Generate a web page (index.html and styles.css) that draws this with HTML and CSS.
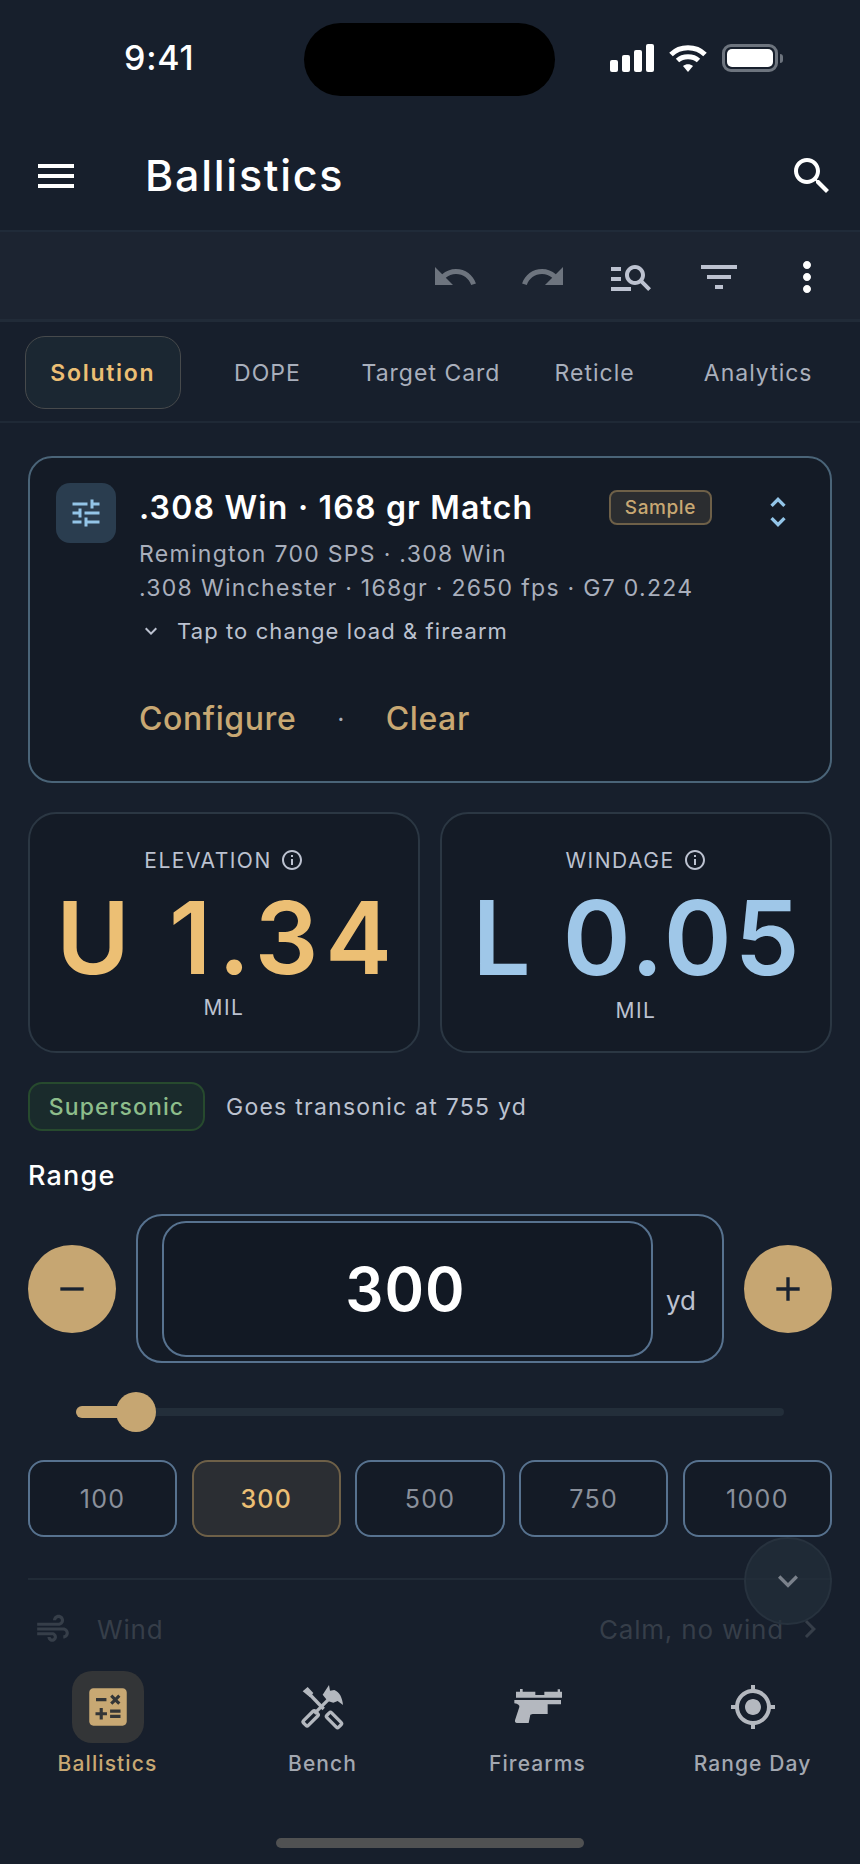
FILE: index.html

```html
<!DOCTYPE html>
<html lang="en">
<head>
    <meta charset="UTF-8">
    <meta name="viewport" content="width=device-width, initial-scale=1.0">
    <title>Ballistics</title>
    <link rel="stylesheet" href="styles.css">
</head>
<body>
    <div class="screen">
        <div class="status-bar">
            <span class="clock">9:41</span>
            <div class="island"></div>
            <div class="status-icons">
                <svg class="signal" width="44" height="28" viewBox="0 0 44 28" fill="#fff">
                    <rect x="0" y="16" width="8" height="12" rx="2"/>
                    <rect x="12" y="11" width="8" height="17" rx="2"/>
                    <rect x="24" y="6" width="8" height="22" rx="2"/>
                    <rect x="36" y="0" width="8" height="28" rx="2"/>
                </svg>
                <svg class="wifi" width="38" height="28" viewBox="0 0 38 28" fill="none" stroke="#fff" stroke-width="5">
                    <path d="M2 10.500C11 1.500 27 1.500 36 10.500"/>
                    <path d="M8.500 16.500C14 11.500 24 11.500 29.500 16.500"/>
                    <path d="M14 22L19 28L24 22C21 19.500 17 19.500 14 22Z" fill="#fff" stroke="none"/>
                </svg>
                <div class="battery"><div class="battery-fill"></div></div>
                <div class="battery-nub"></div>
            </div>
        </div>

        <header class="app-bar">
            <svg class="icon-48" viewBox="0 0 24 24" fill="#fff"><path d="M3 18h18v-2H3v2zm0-5h18v-2H3v2zm0-7v2h18V6H3z"/></svg>
            <h1>Ballistics</h1>
            <svg class="icon-48" viewBox="0 0 24 24" fill="#fff"><path d="M15.500 14h-.79l-.28-.27C15.410 12.590 16 11.110 16 9.500 16 5.910 13.090 3 9.500 3S3 5.910 3 9.500 5.910 16 9.500 16c1.610 0 3.090-.59 4.230-1.570l.27.28v.79l5 4.990L20.490 19l-4.990-5zm-6 0C7.010 14 5 11.990 5 9.500S7.010 5 9.500 5 14 7.010 14 9.500 11.990 14 9.500 14z"/></svg>
        </header>

        <div class="toolbar">
            <svg class="icon-48" viewBox="0 0 24 24" fill="#6d747e"><path d="M12.500 8c-2.650 0-5.050.99-6.900 2.600L2 7v9h9l-3.620-3.620c1.390-1.160 3.160-1.880 5.120-1.880 3.540 0 6.550 2.310 7.600 5.500l2.370-.78C21.080 11.030 17.150 8 12.500 8z"/></svg>
            <svg class="icon-48" viewBox="0 0 24 24" fill="#6d747e"><path d="M18.400 10.600C16.550 8.990 14.150 8 11.500 8c-4.650 0-8.580 3.030-9.960 7.220L3.900 16c1.050-3.190 4.050-5.500 7.600-5.500 1.950 0 3.730.72 5.120 1.880L13 16h9V7l-3.600 3.600z"/></svg>
            <svg class="icon-48" viewBox="0 0 24 24" fill="#bcc2d0"><path d="M7 9H2V7h5v2zm0 3H2v2h5v-2zm13.590 7-3.830-3.830c-.8.52-1.740.83-2.760.83-2.760 0-5-2.240-5-5s2.240-5 5-5 5 2.240 5 5c0 1.020-.31 1.960-.83 2.750L22 17.590 20.590 19zM17 11c0-1.650-1.350-3-3-3s-3 1.350-3 3 1.350 3 3 3 3-1.350 3-3zM2 19h10v-2H2v2z"/></svg>
            <svg class="icon-48" viewBox="0 0 24 24" fill="#bcc2d0"><path d="M10 18h4v-2h-4v2zM3 6v2h18V6H3zm3 7h12v-2H6v2z"/></svg>
            <svg class="icon-48" viewBox="0 0 24 24" fill="#fff"><path d="M12 8c1.100 0 2-.9 2-2s-.9-2-2-2-2 .9-2 2 .9 2 2 2zm0 2c-1.100 0-2 .9-2 2s.9 2 2 2 2-.9 2-2-.9-2-2-2zm0 6c-1.100 0-2 .9-2 2s.9 2 2 2 2-.9 2-2-.9-2-2-2z"/></svg>
        </div>

        <nav class="tabs">
            <div class="tab active">Solution</div>
            <div class="tab">DOPE</div>
            <div class="tab">Target Card</div>
            <div class="tab">Reticle</div>
            <div class="tab">Analytics</div>
        </nav>

        <main class="content">
            <section class="load-card">
                <div class="load-icon">
                    <svg width="36" height="36" viewBox="0 0 24 24" fill="#93c5e8"><path d="M3 17v2h6v-2H3zM3 5v2h10V5H3zm10 16v-2h8v-2h-8v-2h-2v6h2zM7 9v2H3v2h4v2h2V9H7zm14 4v-2H11v2h10zm-6-4h2V7h4V5h-4V3h-2v6z"/></svg>
                </div>
                <div class="load-body">
                    <div class="load-title-row">
                        <h2>.308 Win · 168 gr Match</h2>
                        <span class="sample-chip">Sample</span>
                        <svg class="unfold" width="40" height="40" viewBox="0 0 24 24" fill="#93c5e8"><path d="M12 5.830L15.170 9l1.410-1.410L12 3 7.410 7.590 8.830 9 12 5.830zm0 12.340L8.830 15l-1.410 1.410L12 21l4.590-4.590L15.170 15 12 18.170z"/></svg>
                    </div>
                    <p class="load-sub first">Remington 700 SPS · .308 Win</p>
                    <p class="load-sub">.308 Winchester · 168gr · 2650 fps · G7 0.224</p>
                    <div class="load-hint">
                        <svg width="24" height="24" viewBox="0 0 24 24" fill="#bcc2d0"><path d="M16.590 8.590L12 13.170 7.410 8.590 6 10l6 6 6-6z"/></svg>
                        <span>Tap to change load &amp; firearm</span>
                    </div>
                    <div class="load-actions">
                        <span>Configure</span>
                        <span class="dot">·</span>
                        <span>Clear</span>
                    </div>
                </div>
            </section>

            <section class="readouts">
                <div class="readout">
                    <div class="readout-label">ELEVATION
                        <svg width="24" height="24" viewBox="0 0 24 24" fill="#bcc2d0"><path d="M11 7h2v2h-2zm0 4h2v6h-2zm1-9C6.480 2 2 6.480 2 12s4.480 10 10 10 10-4.480 10-10S17.520 2 12 2zm0 18c-4.410 0-8-3.590-8-8s3.590-8 8-8 8 3.590 8 8-3.590 8-8 8z"/></svg>
                    </div>
                    <div class="readout-value elevation">U 1.34</div>
                    <div class="readout-unit">MIL</div>
                </div>
                <div class="readout">
                    <div class="readout-label">WINDAGE
                        <svg width="24" height="24" viewBox="0 0 24 24" fill="#bcc2d0"><path d="M11 7h2v2h-2zm0 4h2v6h-2zm1-9C6.480 2 2 6.480 2 12s4.480 10 10 10 10-4.480 10-10S17.520 2 12 2zm0 18c-4.410 0-8-3.590-8-8s3.590-8 8-8 8 3.590 8 8-3.590 8-8 8z"/></svg>
                    </div>
                    <div class="readout-value windage">L 0.05</div>
                    <div class="readout-unit">MIL</div>
                </div>
            </section>

            <div class="speed-row">
                <span class="speed-chip">Supersonic</span>
                <span class="speed-note">Goes transonic at 755 yd</span>
            </div>

            <div class="range-label">Range</div>
            <div class="stepper">
                <div class="round-btn">
                    <svg width="40" height="40" viewBox="0 0 24 24" fill="#182230"><path d="M19 13H5v-2h14v2z"/></svg>
                </div>
                <div class="range-field">
                    <div class="range-input">300</div>
                    <span class="range-unit">yd</span>
                </div>
                <div class="round-btn">
                    <svg width="40" height="40" viewBox="0 0 24 24" fill="#182230"><path d="M19 13h-6v6h-2v-6H5v-2h6V5h2v6h6v2z"/></svg>
                </div>
            </div>

            <div class="slider">
                <div class="slider-fill"></div>
                <div class="slider-thumb"></div>
            </div>

            <div class="presets">
                <div class="preset">100</div>
                <div class="preset active">300</div>
                <div class="preset">500</div>
                <div class="preset">750</div>
                <div class="preset">1000</div>
            </div>

            <div class="wind-row">
                <svg width="38" height="38" viewBox="0 0 24 24" fill="#363e49"><path d="M14.500 17c0 1.650-1.350 3-3 3s-3-1.350-3-3h2c0 .55.45 1 1 1s1-.45 1-1-.45-1-1-1H2v-2h9.500c1.650 0 3 1.350 3 3zM19 6.500C19 4.570 17.430 3 15.500 3S12 4.570 12 6.500h2c0-.83.67-1.500 1.500-1.500s1.500.67 1.500 1.500S16.330 8 15.500 8H2v2h13.500c1.930 0 3.500-1.570 3.500-3.500zm-.5 4.500H2v2h16.500c.83 0 1.500.67 1.500 1.500s-.67 1.500-1.500 1.500v2c1.930 0 3.500-1.570 3.500-3.500S20.430 11 18.500 11z"/></svg>
                <span class="wind-name">Wind</span>
                <span class="wind-value">Calm, no wind</span>
                <svg width="36" height="36" viewBox="0 0 24 24" fill="#363e49"><path d="M8.590 16.590L13.170 12 8.590 7.410 10 6l6 6-6 6z"/></svg>
            </div>
        </main>

        <div class="scroll-btn">
            <svg width="40" height="40" viewBox="0 0 24 24" fill="#7a818b"><path d="M7.410 8.590L12 13.170l4.590-4.580L18 10l-6 6-6-6z"/></svg>
        </div>

        <footer class="bottom-nav">
            <div class="nav-item active">
                <div class="nav-icon">
                    <svg width="50" height="50" viewBox="0 0 24 24" fill="#c8a873"><path d="M19 3H5c-1.100 0-2 .9-2 2v14c0 1.100.9 2 2 2h14c1.100 0 2-.9 2-2V5c0-1.100-.9-2-2-2zm-5.970 4.060L14.090 6l1.410 1.410L16.910 6l1.060 1.060-1.410 1.410 1.410 1.410-1.060 1.060-1.410-1.400-1.410 1.410-1.060-1.060 1.410-1.410-1.410-1.420zm-6.780.66h5v1.500h-5v-1.500zM11.500 16h-2v2H8v-2H6v-1.500h2v-2h1.500v2h2V16zm6.500 1.250h-5v-1.500h5v1.500zm0-2.500h-5v-1.500h5v1.500z"/></svg>
                </div>
                <span>Ballistics</span>
            </div>
            <div class="nav-item">
                <div class="nav-icon">
                    <svg width="56" height="52" viewBox="0 0 168 156">
                        <g fill="none" stroke="#b4b8bf" stroke-width="10">
                            <path d="M46 42L86 84"/>
                            <path d="M58 98L106 50"/>
                            <rect x="92" y="107" width="50" height="20" rx="5" transform="rotate(45 117 117)"/>
                            <rect x="22" y="102" width="50" height="20" rx="5" transform="rotate(-45 47 112)"/>
                        </g>
                        <path fill="#b4b8bf" d="M23 31L38 18L55 36L45 49ZM83 41L102 12L105 29L118 27C134 34 142 50 144 72L128 60L115 65L98 60Z"/>
                    </svg>
                </div>
                <span>Bench</span>
            </div>
            <div class="nav-item">
                <div class="nav-icon">
                    <svg width="64" height="52" viewBox="0 0 192 156" fill="#b4b8bf">
                        <path d="M30 50V32H42V24H50V32H88V42H115V32H155V25H162V32H168V50Z"/>
                        <path d="M25 57H165V70H125V99H80L73 101L68 126H33Q26 126 27 118L40 78Q42 70 25 67Z"/>
                    </svg>
                </div>
                <span>Firearms</span>
            </div>
            <div class="nav-item">
                <div class="nav-icon">
                    <svg width="48" height="48" viewBox="0 0 24 24" fill="#b4b8bf"><path d="M12 8c-2.210 0-4 1.790-4 4s1.790 4 4 4 4-1.790 4-4-1.790-4-4-4zm8.940 3c-.46-4.170-3.770-7.480-7.940-7.940V1h-2v2.060C6.830 3.520 3.520 6.830 3.060 11H1v2h2.060c.46 4.170 3.770 7.480 7.940 7.940V23h2v-2.060c4.170-.46 7.480-3.770 7.940-7.940H23v-2h-2.060zM12 19c-3.870 0-7-3.130-7-7s3.130-7 7-7 7 3.130 7 7-3.130 7-7 7z"/></svg>
                </div>
                <span>Range Day</span>
            </div>
        </footer>
        <div class="home-bar"><div class="home-indicator"></div></div>
    </div>
</body>
</html>
```

FILE: styles.css

```css
* {
    box-sizing: border-box;
}

body {
    margin: 0;
    background-color: #171f2c;
    font-family: Inter, "Liberation Sans", sans-serif;
    color: #fff;
}

.screen {
    position: relative;
    width: 860px;
    height: 1864px;
    overflow: hidden;
    display: flex;
    flex-direction: column;
    background-color: #171f2c;
}

.icon-48 {
    width: 48px;
    height: 48px;
    flex: none;
}

/* status bar */
.status-bar {
    position: relative;
    height: 122px;
    flex: none;
}

.clock {
    position: absolute;
    left: 124px;
    top: 38px;
    font-size: 34px;
    font-weight: 500;
    letter-spacing: 0.8px;
    line-height: 40px;
}

.island {
    position: absolute;
    left: 304px;
    top: 23px;
    width: 251px;
    height: 73px;
    background: #000;
    border-radius: 37px;
}

.status-icons {
    position: absolute;
    left: 610px;
    top: 44px;
    display: flex;
    align-items: center;
}

.wifi {
    margin-left: 15px;
}

.battery {
    margin-left: 15px;
    width: 56px;
    height: 28px;
    border: 3px solid #6d747e;
    border-radius: 9px;
    padding: 2px;
}

.battery-fill {
    height: 100%;
    background: #fff;
    border-radius: 5px;
}

.battery-nub {
    width: 3px;
    height: 9px;
    margin-left: 2px;
    background: #6d747e;
    border-radius: 0 3px 3px 0;
}

/* app bar */
.app-bar {
    height: 108px;
    flex: none;
    display: flex;
    align-items: center;
    padding: 0 24px 0 32px;
}

.app-bar h1 {
    flex: 1;
    margin: -3px 0 0 65px;
    font-size: 43px;
    font-weight: 500;
    letter-spacing: 1.750px;
}

.toolbar {
    height: 92px;
    flex: none;
    display: flex;
    justify-content: flex-end;
    align-items: center;
    gap: 40px;
    padding: 3px 29px 0 0;
    background-color: #1c2431;
    border-top: 2px solid #202b39;
    border-bottom: 3px solid #212b38;
}

/* tabs */
.tabs {
    height: 101px;
    flex: none;
    display: flex;
    align-items: center;
    padding: 2px 20px 0;
    border-bottom: 2px solid #1f2936;
}

.tab {
    flex: 1;
    height: 73px;
    margin: 0 5px;
    display: flex;
    align-items: center;
    justify-content: center;
    font-size: 23px;
    letter-spacing: 1px;
    color: #a9afbc;
    white-space: nowrap;
}

.tab.active {
    color: #ecbf74;
    font-weight: 600;
    letter-spacing: 1.700px;
    background-color: #1b2732;
    border: 1.500px solid #474a4c;
    border-radius: 20px;
}

.content {
    flex: 1;
    overflow: hidden;
    padding: 33px 28px 0 28px;
}

/* selected load */
.load-card {
    height: 327px;
    display: flex;
    padding: 25px 14px 0 26px;
    background-color: #141b26;
    border: 2px solid #4a6478;
    border-radius: 24px;
}

.load-icon {
    width: 60px;
    height: 60px;
    flex: none;
    display: flex;
    align-items: center;
    justify-content: center;
    background-color: #2a3d4f;
    border-radius: 14px;
}

.load-body {
    flex: 1;
    margin-left: 23px;
}

.load-title-row {
    display: flex;
    align-items: center;
    height: 48px;
}

.load-title-row h2 {
    flex: 1;
    margin: 0;
    font-size: 32px;
    font-weight: 600;
    letter-spacing: 1.200px;
    white-space: nowrap;
}

.sample-chip {
    padding: 4px 14px;
    font-size: 19px;
    font-weight: 500;
    letter-spacing: 0.6px;
    color: #c8a873;
    background-color: #2b2d30;
    border: 2px solid #6e6048;
    border-radius: 8px;
}

.unfold {
    margin: 10px 18px 0 46px;
}

.load-sub {
    margin: 10px 0 0;
    font-size: 23px;
    line-height: 24px;
    letter-spacing: 1.300px;
    color: #a9afbc;
}

.load-sub.first {
    margin-top: 11px;
}

.load-hint {
    display: flex;
    align-items: center;
    gap: 14px;
    margin-top: 18px;
    font-size: 22px;
    letter-spacing: 1.100px;
    color: #bcc2d0;
}

.load-actions {
    display: flex;
    align-items: center;
    gap: 41px;
    margin-top: 55px;
    font-size: 32px;
    font-weight: 500;
    letter-spacing: 0.6px;
    color: #c8a873;
}

.load-actions .dot {
    color: #a9afbc;
    font-size: 22px;
}

/* elevation, windage */
.readouts {
    display: flex;
    gap: 20px;
    margin-top: 29px;
}

.readout {
    flex: 1;
    height: 241px;
    display: flex;
    flex-direction: column;
    align-items: center;
    padding-top: 32px;
    background-color: #141b26;
    border: 2px solid #2b3743;
    border-radius: 28px;
}

.readout-label {
    display: flex;
    align-items: center;
    gap: 8px;
    height: 28px;
    font-size: 21px;
    letter-spacing: 1.500px;
    color: #bcc2d0;
}

.readout-value {
    margin-top: 8px;
    height: 112px;
    line-height: 112px;
    font-weight: 600;
    white-space: nowrap;
}

.readout-value.elevation {
    padding-left: 7px;
    font-size: 100px;
    letter-spacing: 7px;
    color: #ecbf74;
}

.readout-value.windage {
    padding-left: 3px;
    font-size: 103px;
    letter-spacing: 3px;
    color: #9fc7e8;
}

.readout-unit {
    margin-top: 2px;
    font-size: 21px;
    line-height: 24px;
    letter-spacing: 1.500px;
    color: #bcc2d0;
}

.readout-value.windage + .readout-unit {
    margin-top: 5px;
}

/* supersonic */
.speed-row {
    display: flex;
    align-items: center;
    gap: 21px;
    margin-top: 29px;
}

.speed-chip {
    height: 49px;
    width: 177px;
    display: flex;
    align-items: center;
    justify-content: center;
    font-size: 23px;
    font-weight: 500;
    letter-spacing: 1.100px;
    color: #8dbd8b;
    background-color: #1a2b2c;
    border: 2px solid #274a2e;
    border-radius: 14px;
}

.speed-note {
    font-size: 23px;
    letter-spacing: 1.250px;
    color: #bcc2d0;
}

/* range */
.range-label {
    margin-top: 29px;
    height: 32px;
    line-height: 32px;
    font-size: 27px;
    font-weight: 500;
    letter-spacing: 1.200px;
}

.stepper {
    display: flex;
    align-items: center;
    gap: 20px;
    margin-top: 22px;
}

.round-btn {
    width: 88px;
    height: 88px;
    flex: none;
    display: flex;
    align-items: center;
    justify-content: center;
    background-color: #c6a672;
    border-radius: 50%;
}

.range-field {
    flex: 1;
    height: 149px;
    display: flex;
    align-items: center;
    padding-left: 24px;
    background-color: #141b26;
    border: 2px solid #57728f;
    border-radius: 26px;
}

.range-input {
    width: 491px;
    height: 136px;
    display: flex;
    align-items: center;
    justify-content: center;
    padding-right: 4px;
    font-size: 60px;
    font-weight: 600;
    letter-spacing: 1px;
    background-color: #121924;
    border: 2px solid #57728f;
    border-radius: 24px;
}

.range-unit {
    margin: 24px 0 0 13px;
    font-size: 26px;
    color: #bcc2d0;
}

.slider {
    position: relative;
    height: 8px;
    margin: 45px 48px 0 48px;
    background-color: #232e3a;
    border-radius: 4px;
}

.slider-fill {
    position: absolute;
    left: 0;
    top: -2px;
    width: 60px;
    height: 12px;
    background-color: #c6a672;
    border-radius: 6px;
}

.slider-thumb {
    position: absolute;
    left: 40px;
    top: -16px;
    width: 40px;
    height: 40px;
    background-color: #c6a672;
    border-radius: 50%;
}

.presets {
    display: flex;
    gap: 14.500px;
    margin-top: 44px;
}

.preset {
    flex: 1;
    height: 77px;
    display: flex;
    align-items: center;
    justify-content: center;
    font-size: 25px;
    letter-spacing: 1.300px;
    color: #8a909b;
    background-color: #141b26;
    border: 2px solid #57728f;
    border-radius: 16px;
}

.preset.active {
    color: #ecbf74;
    font-weight: 500;
    background-color: #2b2e33;
    border-color: #6e6048;
}

.wind-row {
    display: flex;
    align-items: center;
    margin-top: 41px;
    padding: 25px 4px 0 6px;
    height: 75px;
    border-top: 2px solid #212b37;
    color: #363e49;
    font-size: 26px;
}

.wind-name {
    flex: 1;
    margin-left: 25px;
    letter-spacing: 0.8px;
}

.wind-value {
    margin-right: 8px;
    letter-spacing: 0.8px;
}

.scroll-btn {
    position: absolute;
    left: 744px;
    top: 1537px;
    width: 88px;
    height: 88px;
    display: flex;
    align-items: center;
    justify-content: center;
    background-color: rgba(35, 47, 58, 0.7);
    border: 2px solid #27323e;
    border-radius: 50%;
}

/* bottom nav */
.bottom-nav {
    height: 139px;
    flex: none;
    display: flex;
    padding-top: 21px;
    background-color: #171f2c;
}

.nav-item {
    flex: 1;
    display: flex;
    flex-direction: column;
    align-items: center;
    font-size: 21px;
    font-weight: 500;
    letter-spacing: 1.100px;
    color: #a3a8b1;
}

.nav-icon {
    width: 72px;
    height: 72px;
    display: flex;
    align-items: center;
    justify-content: center;
    margin-bottom: 8px;
    border-radius: 20px;
}

.nav-item.active {
    color: #c8a873;
}

.nav-item.active .nav-icon {
    background-color: #333537;
}

.home-bar {
    height: 75px;
    flex: none;
    display: flex;
    justify-content: center;
    padding-top: 49px;
}

.home-indicator {
    width: 308px;
    height: 10px;
    background-color: #505152;
    border-radius: 5px;
}
```
